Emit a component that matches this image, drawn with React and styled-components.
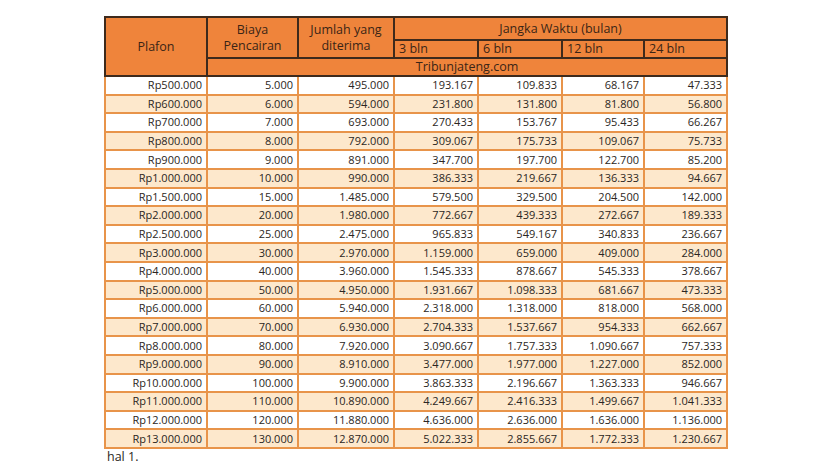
import React from 'react';
import styled, { createGlobalStyle } from 'styled-components';

const ORANGE = '#EF843B';
const PEACH = '#FDE8CC';
const LINE = '#E8944A';
const DARK = '#3E2A1C';

const GlobalStyle = createGlobalStyle`
  html, body {
    margin: 0;
    background: #FFFFFF;
  }
`;

const Page = styled.div`
  width: 830px;
  height: 466px;
  box-sizing: border-box;
  padding: 16px 0 0 104px;
  font-family: "Open Sans", Lato, sans-serif;
  color: #2B2622;
  overflow: hidden;
`;

const Table = styled.table`
  border-collapse: collapse;
  table-layout: fixed;
  width: 622px;
`;

const Col = styled.col`
  width: ${({ w }) => w}px;
`;

const HeadRow = styled.tr`
  height: ${({ h }) => h}px;
`;

const HeadCell = styled.th`
  background: ${ORANGE};
  border: 2px solid ${DARK};
  font-weight: 400;
  font-size: 12.5px;
  line-height: 16px;
  color: #3A2416;
  padding: 0 4px;
  text-align: ${({ align }) => align || 'center'};
  vertical-align: middle;
  white-space: nowrap;
`;

const Row = styled.tr`
  height: 18.6px;
  background: ${({ odd }) => (odd ? PEACH : '#FFFFFF')};
`;

const Cell = styled.td`
  border: 2px solid ${LINE};
  font-size: 11px;
  line-height: 14px;
  text-align: right;
  padding: 0 4px 0 0;
  white-space: nowrap;
`;

const Note = styled.p`
  margin: 1px 0 0 3px;
  font-size: 12.5px;
  line-height: 14px;
  color: #2B2622;
`;

const widths = [102, 91, 96, 84, 84, 82, 83];

const rows = [
  ['Rp500.000', '5.000', '495.000', '193.167', '109.833', '68.167', '47.333'],
  ['Rp600.000', '6.000', '594.000', '231.800', '131.800', '81.800', '56.800'],
  ['Rp700.000', '7.000', '693.000', '270.433', '153.767', '95.433', '66.267'],
  ['Rp800.000', '8.000', '792.000', '309.067', '175.733', '109.067', '75.733'],
  ['Rp900.000', '9.000', '891.000', '347.700', '197.700', '122.700', '85.200'],
  ['Rp1.000.000', '10.000', '990.000', '386.333', '219.667', '136.333', '94.667'],
  ['Rp1.500.000', '15.000', '1.485.000', '579.500', '329.500', '204.500', '142.000'],
  ['Rp2.000.000', '20.000', '1.980.000', '772.667', '439.333', '272.667', '189.333'],
  ['Rp2.500.000', '25.000', '2.475.000', '965.833', '549.167', '340.833', '236.667'],
  ['Rp3.000.000', '30.000', '2.970.000', '1.159.000', '659.000', '409.000', '284.000'],
  ['Rp4.000.000', '40.000', '3.960.000', '1.545.333', '878.667', '545.333', '378.667'],
  ['Rp5.000.000', '50.000', '4.950.000', '1.931.667', '1.098.333', '681.667', '473.333'],
  ['Rp6.000.000', '60.000', '5.940.000', '2.318.000', '1.318.000', '818.000', '568.000'],
  ['Rp7.000.000', '70.000', '6.930.000', '2.704.333', '1.537.667', '954.333', '662.667'],
  ['Rp8.000.000', '80.000', '7.920.000', '3.090.667', '1.757.333', '1.090.667', '757.333'],
  ['Rp9.000.000', '90.000', '8.910.000', '3.477.000', '1.977.000', '1.227.000', '852.000'],
  ['Rp10.000.000', '100.000', '9.900.000', '3.863.333', '2.196.667', '1.363.333', '946.667'],
  ['Rp11.000.000', '110.000', '10.890.000', '4.249.667', '2.416.333', '1.499.667', '1.041.333'],
  ['Rp12.000.000', '120.000', '11.880.000', '4.636.000', '2.636.000', '1.636.000', '1.136.000'],
  ['Rp13.000.000', '130.000', '12.870.000', '5.022.333', '2.855.667', '1.772.333', '1.230.667'],
];

const App = () => (
  <Page>
    <GlobalStyle />
    <Table>
      <colgroup>
        {widths.map((w, i) => (
          <Col key={i} w={w} />
        ))}
      </colgroup>
      <thead>
        <HeadRow h={23}>
          <HeadCell rowSpan={3}>Plafon</HeadCell>
          <HeadCell rowSpan={2}>Biaya<br />Pencairan</HeadCell>
          <HeadCell rowSpan={2}>Jumlah yang<br />diterima</HeadCell>
          <HeadCell colSpan={4}>Jangka Waktu (bulan)</HeadCell>
        </HeadRow>
        <HeadRow h={18}>
          <HeadCell align="left">3 bln</HeadCell>
          <HeadCell align="left">6 bln</HeadCell>
          <HeadCell align="left">12 bln</HeadCell>
          <HeadCell align="left">24 bln</HeadCell>
        </HeadRow>
        <HeadRow h={17}>
          <HeadCell colSpan={6}>Tribunjateng.com</HeadCell>
        </HeadRow>
      </thead>
      <tbody>
        {rows.map((r, i) => (
          <Row key={r[0]} odd={i % 2 === 1}>
            {r.map((v, j) => (
              <Cell key={j}>{v}</Cell>
            ))}
          </Row>
        ))}
      </tbody>
    </Table>
    <Note>hal 1.</Note>
  </Page>
);

export default App;
